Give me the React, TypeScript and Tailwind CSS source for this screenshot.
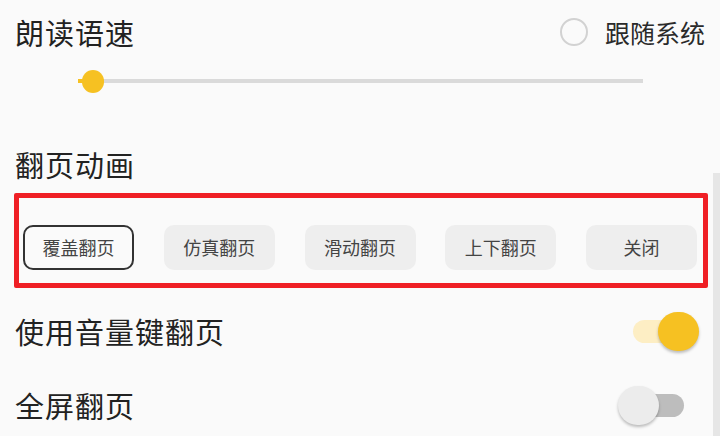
import React from "react"
import clsx from "clsx"

const font = { fontFamily: '"Noto Sans CJK SC", "Noto Sans", sans-serif' }

const modes = ["覆盖翻页", "仿真翻页", "滑动翻页", "上下翻页", "关闭"]

const Toggle = ({ on, className }: { on: boolean; className?: string }) => (
  <div className={clsx("relative w-[70px] h-[40px]", className)}>
    <div
      className={clsx(
        "absolute left-[4px] right-[4px] top-[9px] h-[23px] rounded-full",
        on ? "bg-[#fdeec4]" : "bg-[#bdbdbd]"
      )}
    />
    <div
      className={clsx(
        "absolute top-px w-[41px] h-[39px] rounded-full shadow-[0_2px_3px_rgba(0,0,0,0.25)]",
        on ? "right-0 bg-[#f6c122]" : "left-0 bg-[#ececec]"
      )}
    />
  </div>
)

export default function App() {
  return (
    <div
      className="relative w-[720px] h-[436px] overflow-hidden bg-[#fafafa] text-[#222]"
      style={font}
    >
      <div className="flex items-center justify-between h-[64px] pl-[15px] pr-[15px]">
        <span className="text-[29px] leading-none tracking-[1px]">朗读语速</span>
        <div className="flex items-center gap-[17px]">
          <div className="w-[28px] h-[28px] rounded-full border-2 border-[#d2d2d2]" />
          <span className="text-[25px] leading-none text-[#2a2a2a]">跟随系统</span>
        </div>
      </div>

      <div className="relative ml-[78px] w-[565px] h-[24px] mt-[5px] flex items-center">
        <div className="w-full h-[4px] bg-[#dadada]" />
        <div className="absolute left-0 w-[15px] h-[4px] bg-[#f6c122]" />
        <div className="absolute left-[4px] w-[22px] h-[23px] rounded-full bg-[#f6c122]" />
      </div>

      <div className="flex items-center h-[48px] mt-[47px] pl-[15px]">
        <span className="text-[29px] leading-none tracking-[1px]">翻页动画</span>
      </div>

      <div className="ml-[14px] mr-[12px] mt-[5px] h-[95px] border-[5px] border-[#ef1f25] rounded-[2px] flex items-end justify-between pl-[4px] pr-[6px] pb-[13px]">
        {modes.map((m, i) => (
          <div
            key={m}
            className={clsx(
              "w-[111px] h-[45px] rounded-[10px] flex items-center justify-center text-[18px] text-[#444]",
              i === 0 ? "border-2 border-[#333]" : "bg-[#eeeeee]"
            )}
          >
            {m}
          </div>
        ))}
      </div>

      <div className="flex items-center justify-between h-[74px] mt-[6px] pl-[15px] pr-[21px]">
        <span className="text-[29px] leading-none tracking-[1px]">使用音量键翻页</span>
        <Toggle on />
      </div>
      <div className="flex items-center justify-between h-[74px] pl-[15px] pr-[32px]">
        <span className="text-[29px] leading-none tracking-[1px]">全屏翻页</span>
        <Toggle on={false} />
      </div>

      <div className="absolute right-0 top-[173px] bottom-0 w-[7px] bg-[#e6e6e6]" />
    </div>
  )
}
